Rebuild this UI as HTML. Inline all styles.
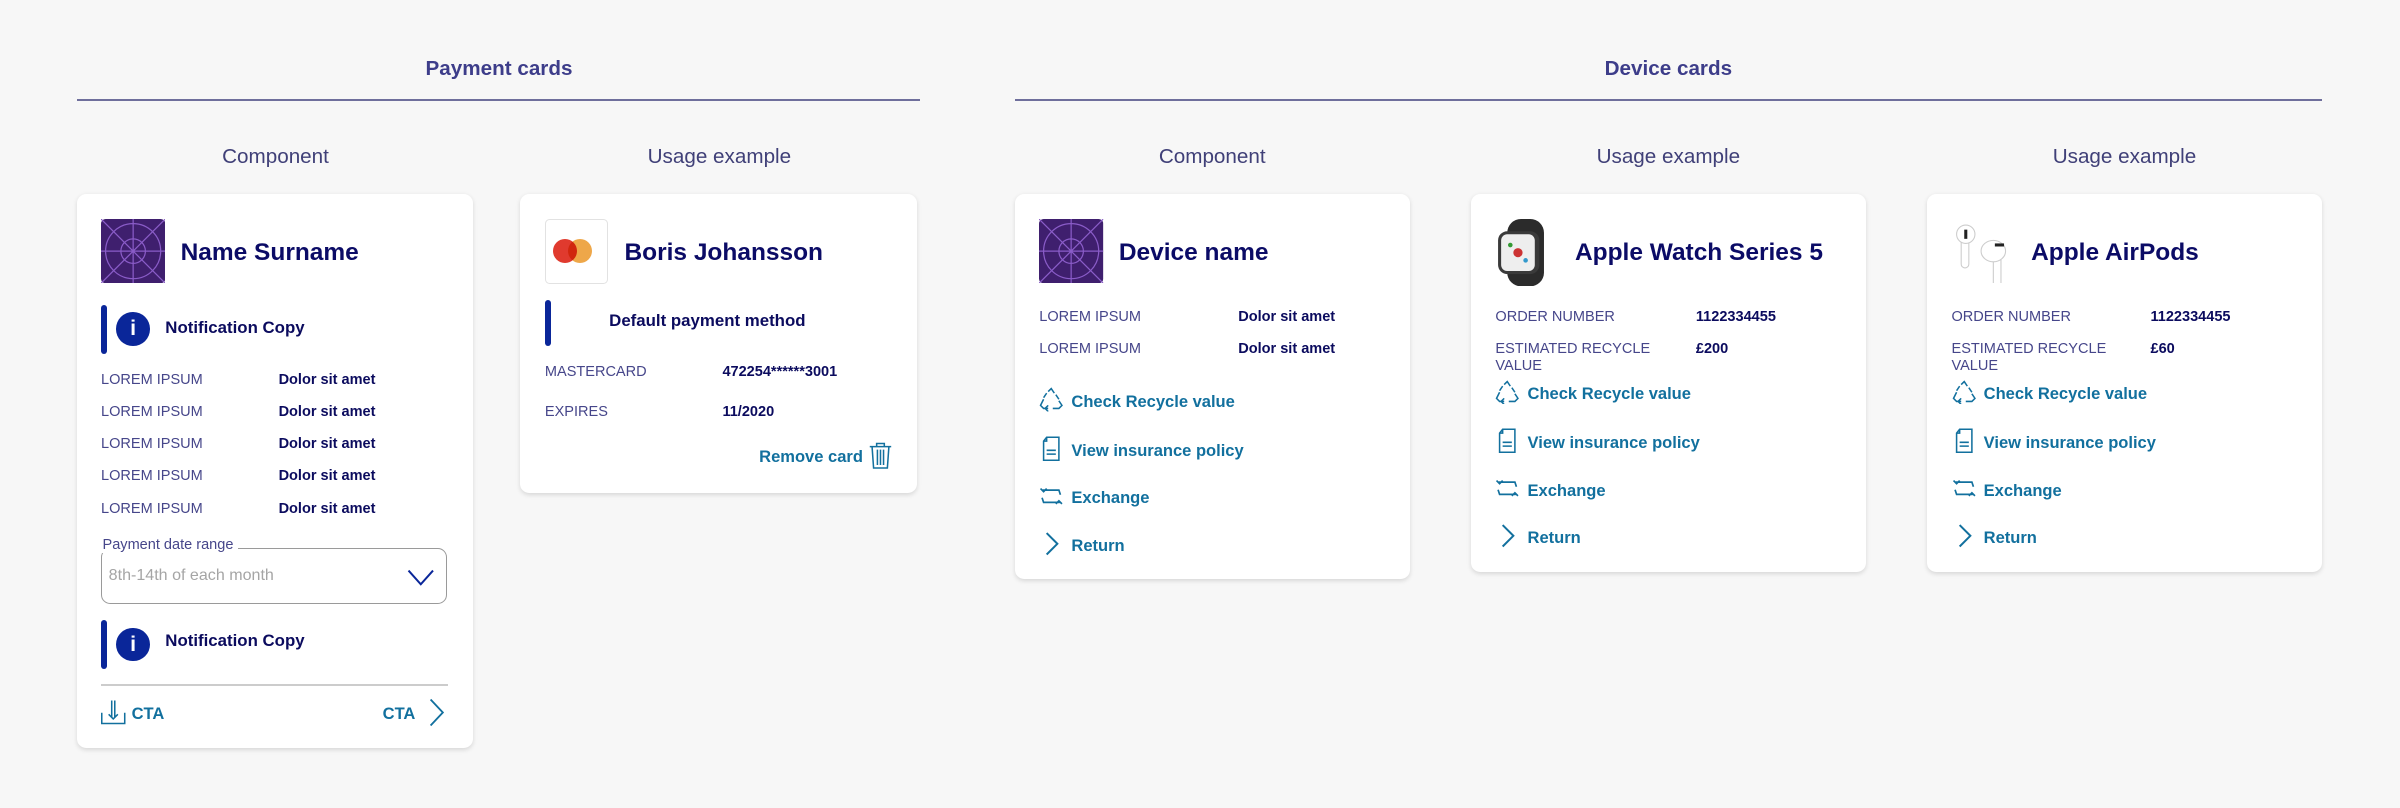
<!DOCTYPE html>
<html><head><meta charset="utf-8"><style>
html,body{margin:0;padding:0;background:#f7f7f7;width:2400px;height:808px;overflow:hidden}
#w{zoom:1.5306;position:relative;width:1568px;height:528px;font-family:"Liberation Sans",sans-serif;color:#0b0b5e}
.a{position:absolute}
.h{font-size:13.5px;font-weight:bold;color:#3d3d8a;text-align:center;transform:translateX(-50%);white-space:nowrap}
.s{font-size:13.5px;color:#404078;text-align:center;transform:translateX(-50%);white-space:nowrap}
.ln{height:1px;background:#6f6f9c}
.c{background:#fff;border-radius:6px;box-shadow:0 1px 3px rgba(0,0,0,.13)}
.t{font-size:16px;font-weight:bold;color:#0b0b66;white-space:nowrap}
.l{font-size:9.5px;color:#46468a;white-space:nowrap;line-height:11px}
.v{font-size:9.5px;font-weight:bold;color:#0b0b5e;white-space:nowrap}
.k{font-size:10.8px;font-weight:bold;color:#12709e;white-space:nowrap}
.nb{width:4px;height:32px;background:#0a2699;border-radius:2px}
.ni{width:22px;height:22px;border-radius:50%;background:#0a2699;color:#fff;font-size:14px;font-weight:bold;text-align:center;line-height:22px}
.nt{font-size:11px;font-weight:bold;color:#0b0b5e;white-space:nowrap}
</style></head><body><div id="w">
<div class="a h" style="left:326px;top:37px">Payment cards</div>
<div class="a ln" style="left:50px;top:65px;width:551px"></div>
<div class="a h" style="left:1090px;top:37px">Device cards</div>
<div class="a ln" style="left:663px;top:65px;width:854px"></div>
<div class="a s" style="left:180px;top:95px">Component</div>
<div class="a s" style="left:470px;top:95px">Usage example</div>
<div class="a s" style="left:792px;top:95px">Component</div>
<div class="a s" style="left:1090px;top:95px">Usage example</div>
<div class="a s" style="left:1388px;top:95px">Usage example</div>

<svg width="0" height="0" style="position:absolute"><defs>
<symbol id="ph" viewBox="0 0 42 42"><rect width="42" height="42" rx="3" fill="#3f1f6e"/><g stroke="#8a5cc8" stroke-width="0.8" fill="none"><circle cx="21" cy="21" r="18"/><circle cx="21" cy="21" r="8"/><path d="M21 0V42M0 21H42M0 0L42 42M42 0L0 42"/></g></symbol>
<symbol id="rc" viewBox="0 0 16 16"><g fill="none" stroke="#12709e" stroke-width="1"><path d="M6 3L8 1L10 4M3 8L1 12L3 14H6M13 9L15 12L13 14H9M5 4L3 7M11 5L13 8M6 12L4 14L6 16"/></g></symbol>
<symbol id="dc" viewBox="0 0 16 16"><g fill="none" stroke="#12709e" stroke-width="1"><path d="M5 0.5H13V15.5H3V3Z M5 0.5V3H3M5 9H11M5 11.5H11"/></g></symbol>
<symbol id="ex" viewBox="0 0 16 16"><g fill="none" stroke="#12709e" stroke-width="1.1"><path d="M1 3L3 5L5 3M3 5V4H13L14 7M15 13L13 11L11 13M13 11V12H3L2 9"/></g></symbol>
<symbol id="ch" viewBox="0 0 16 16"><path d="M5 1L12 8L5 15" fill="none" stroke="#12709e" stroke-width="1.3"/></symbol>
</defs></svg>

<!-- card 1 -->
<div class="a c" style="left:50px;top:127px;width:259px;height:362px"></div>
<svg class="a" style="left:66px;top:143px" width="42" height="42"><use href="#ph"/></svg>
<div class="a t" style="left:118px;top:156px">Name Surname</div>
<div class="a nb" style="left:66px;top:199px"></div><div class="a ni" style="left:76px;top:204px">i</div>
<div class="a nt" style="left:108px;top:208px">Notification Copy</div>
<div class="a l" style="left:66px;top:243px">LOREM IPSUM</div><div class="a v" style="left:182px;top:243px">Dolor sit amet</div>
<div class="a l" style="left:66px;top:264px">LOREM IPSUM</div><div class="a v" style="left:182px;top:264px">Dolor sit amet</div>
<div class="a l" style="left:66px;top:285px">LOREM IPSUM</div><div class="a v" style="left:182px;top:285px">Dolor sit amet</div>
<div class="a l" style="left:66px;top:306px">LOREM IPSUM</div><div class="a v" style="left:182px;top:306px">Dolor sit amet</div>
<div class="a l" style="left:66px;top:327px">LOREM IPSUM</div><div class="a v" style="left:182px;top:327px">Dolor sit amet</div>
<div class="a" style="left:66px;top:358px;width:225px;height:35px;border:1px solid #9a9a9a;border-radius:6px"></div>
<div class="a" style="left:64px;top:351px;background:#fff;padding:0 3px;font-size:9.5px;color:#46468a">Payment date range</div>
<div class="a" style="left:71px;top:370px;font-size:10.5px;color:#a5a5a5">8th-14th of each month</div>
<svg class="a" style="left:266px;top:372px" width="18" height="11"><path d="M1 1L9 10L17 1" fill="none" stroke="#0a2699" stroke-width="1.3"/></svg>
<div class="a nb" style="left:66px;top:405px"></div><div class="a ni" style="left:76px;top:410px">i</div>
<div class="a nt" style="left:108px;top:412px">Notification Copy</div>
<div class="a" style="left:66px;top:447px;width:227px;height:1px;background:#ccc"></div>
<svg class="a" style="left:66px;top:457px" width="16" height="17"><g fill="none" stroke="#12709e" stroke-width="1"><path d="M0.5 9V16H15.5V9M7 1V12M9 1V12M5 10L8 13L11 10"/></g></svg>
<div class="a k" style="left:86px;top:460px">CTA</div>
<div class="a k" style="left:250px;top:460px">CTA</div>
<svg class="a" style="left:278px;top:456px" width="14" height="19"><path d="M3 1L11 9.5L3 18" fill="none" stroke="#12709e" stroke-width="1.2"/></svg>

<!-- card 2 -->
<div class="a c" style="left:340px;top:127px;width:259px;height:195px"></div>
<div class="a" style="left:356px;top:143px;width:40px;height:41px;border:1px solid #e2e2e2;border-radius:3px"></div>
<div class="a" style="left:361px;top:156px;width:16px;height:16px;border-radius:50%;background:#e03a2e"></div>
<div class="a" style="left:371px;top:156px;width:16px;height:16px;border-radius:50%;background:#eea23f;mix-blend-mode:multiply;opacity:.95"></div>
<div class="a t" style="left:408px;top:156px">Boris Johansson</div>
<div class="a nb" style="left:356px;top:196px;height:30px"></div>
<div class="a nt" style="left:398px;top:203px">Default payment method</div>
<div class="a l" style="left:356px;top:238px">MASTERCARD</div><div class="a v" style="left:472px;top:238px">472254******3001</div>
<div class="a l" style="left:356px;top:264px">EXPIRES</div><div class="a v" style="left:472px;top:264px">11/2020</div>
<div class="a k" style="left:496px;top:292px">Remove card</div>
<svg class="a" style="left:568px;top:289px" width="15" height="18"><g fill="none" stroke="#12709e" stroke-width="1"><path d="M0.5 3H14.5M5 3V1H10V3M2 3L3 17H12L13 3M5.5 5V15M7.5 5V15M9.5 5V15"/></g></svg>

<!-- card 3 -->
<div class="a c" style="left:663px;top:127px;width:258px;height:251px"></div>
<svg class="a" style="left:679px;top:143px" width="42" height="42"><use href="#ph"/></svg>
<div class="a t" style="left:731px;top:156px">Device name</div>
<div class="a l" style="left:679px;top:202px">LOREM IPSUM</div><div class="a v" style="left:809px;top:202px">Dolor sit amet</div>
<div class="a l" style="left:679px;top:223px">LOREM IPSUM</div><div class="a v" style="left:809px;top:223px">Dolor sit amet</div>
<svg class="a" style="left:679px;top:253px" width="16" height="16"><use href="#rc"/></svg><div class="a k" style="left:700px;top:256px">Check Recycle value</div>
<svg class="a" style="left:679px;top:284px" width="16" height="18"><use href="#dc"/></svg><div class="a k" style="left:700px;top:288px">View insurance policy</div>
<svg class="a" style="left:679px;top:316px" width="16" height="16"><use href="#ex"/></svg><div class="a k" style="left:700px;top:319px">Exchange</div>
<svg class="a" style="left:679px;top:346px" width="16" height="18"><use href="#ch"/></svg><div class="a k" style="left:700px;top:350px">Return</div>

<!-- card 4 & 5 -->
<div class="a c" style="left:961px;top:127px;width:258px;height:247px"></div>
<div class="a c" style="left:1259px;top:127px;width:258px;height:247px"></div>
<svg class="a" style="left:977px;top:143px" width="42" height="44"><rect x="8" y="0" width="24" height="44" rx="9" fill="#2b2b2b"/><rect x="2" y="8" width="27" height="28" rx="6" fill="#3a3a3a"/><rect x="4" y="10" width="22" height="24" rx="4" fill="#eee"/><circle cx="15" cy="22" r="3" fill="#c33"/><circle cx="10" cy="17" r="1.5" fill="#393"/><circle cx="20" cy="27" r="1.5" fill="#39c"/></svg>
<div class="a t" style="left:1029px;top:156px">Apple Watch Series 5</div>
<div class="a l" style="left:977px;top:202px">ORDER NUMBER</div><div class="a v" style="left:1108px;top:202px">1122334455</div>
<div class="a l" style="left:977px;top:223px">ESTIMATED RECYCLE<br>VALUE</div><div class="a v" style="left:1108px;top:223px">£200</div>
<svg class="a" style="left:1275px;top:145px" width="40" height="40"><g fill="#fff" stroke="#ccc" stroke-width=".7"><rect x="6" y="8" width="5" height="22" rx="2.5"/><ellipse cx="9" cy="8" rx="6" ry="6"/><rect x="27" y="20" width="5" height="22" rx="2.5"/><ellipse cx="27" cy="19" rx="8" ry="7"/></g><rect x="8" y="5" width="2" height="6" fill="#222"/><rect x="28" y="14" width="6" height="2" fill="#222"/></svg>
<div class="a t" style="left:1327px;top:156px">Apple AirPods</div>
<div class="a l" style="left:1275px;top:202px">ORDER NUMBER</div><div class="a v" style="left:1405px;top:202px">1122334455</div>
<div class="a l" style="left:1275px;top:223px">ESTIMATED RECYCLE<br>VALUE</div><div class="a v" style="left:1405px;top:223px">£60</div>

<svg class="a" style="left:977px;top:248px" width="16" height="16"><use href="#rc"/></svg><div class="a k" style="left:998px;top:251px">Check Recycle value</div>
<svg class="a" style="left:977px;top:279px" width="16" height="18"><use href="#dc"/></svg><div class="a k" style="left:998px;top:283px">View insurance policy</div>
<svg class="a" style="left:977px;top:311px" width="16" height="16"><use href="#ex"/></svg><div class="a k" style="left:998px;top:314px">Exchange</div>
<svg class="a" style="left:977px;top:341px" width="16" height="18"><use href="#ch"/></svg><div class="a k" style="left:998px;top:345px">Return</div>

<svg class="a" style="left:1275px;top:248px" width="16" height="16"><use href="#rc"/></svg><div class="a k" style="left:1296px;top:251px">Check Recycle value</div>
<svg class="a" style="left:1275px;top:279px" width="16" height="18"><use href="#dc"/></svg><div class="a k" style="left:1296px;top:283px">View insurance policy</div>
<svg class="a" style="left:1275px;top:311px" width="16" height="16"><use href="#ex"/></svg><div class="a k" style="left:1296px;top:314px">Exchange</div>
<svg class="a" style="left:1275px;top:341px" width="16" height="18"><use href="#ch"/></svg><div class="a k" style="left:1296px;top:345px">Return</div>
</div></body></html>
